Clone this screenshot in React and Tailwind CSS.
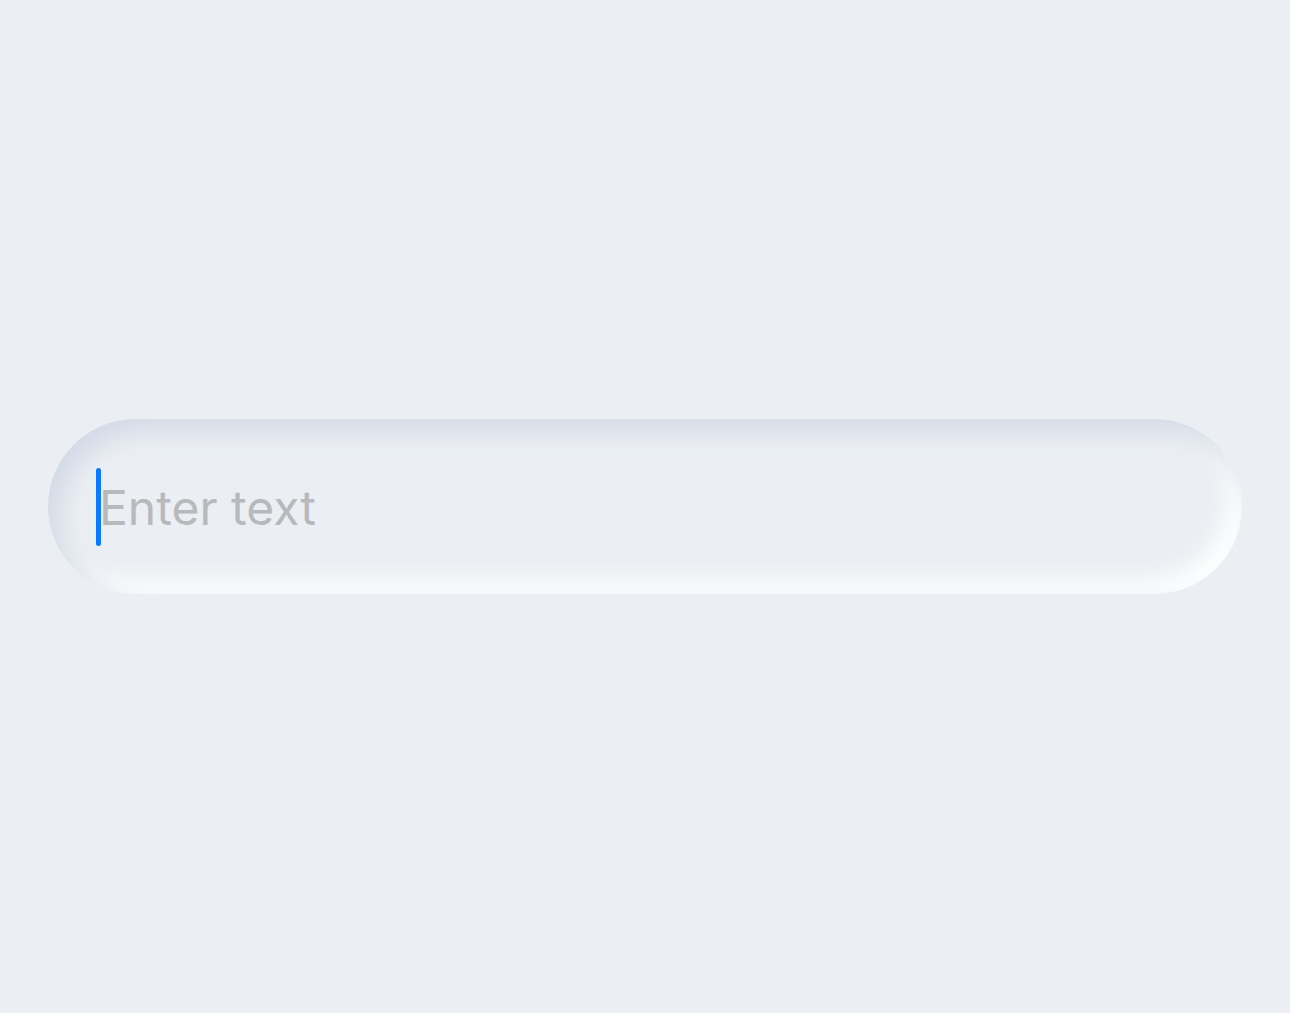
export default function App() {
  return (
    <div className="min-h-[1013px] w-full bg-[#ebeff3] flex items-center px-[48px]" style={{ fontFamily: 'Inter, "Noto Sans", sans-serif' }}>
      <div className="w-full h-[175px] rounded-full bg-[#ebeff3] shadow-[inset_12px_12px_24px_#d3dae6,inset_-12px_-12px_24px_#ffffff] flex items-center pl-[50px]">
        <div className="relative flex items-center">
          <span className="absolute left-[-2px] top-1/2 -translate-y-1/2 w-[5px] h-[78px] rounded-full bg-[#0a7aff]" />
          <span className="text-[48px] leading-none text-[#b8b9bd] pl-[1px] translate-y-[1px]">Enter text</span>
        </div>
      </div>
    </div>
  );
}
